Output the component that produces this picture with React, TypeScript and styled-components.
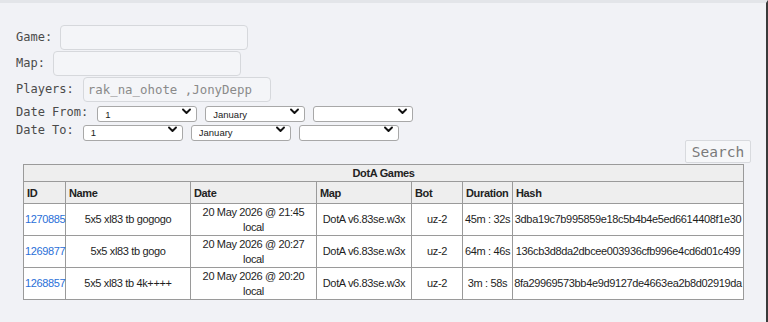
import React from "react";
import styled, { createGlobalStyle } from "styled-components";

const Global = createGlobalStyle`
  html, body { margin: 0; padding: 0; background: #f1f2f6; }
  * { box-sizing: border-box; }
`;

const Page = styled.div`
  width: 768px;
  height: 322px;
  border-top: 3px solid #e3e5e9;
  border-right: 2px solid #3a3a3a;
  padding-top: 21px;
  background: #f1f2f6;
`;

const Form = styled.form`
  display: flex;
  flex-direction: column;
  padding-left: 16px;
`;

const FieldRow = styled.div<{ $h: number; $gap: number }>`
  display: flex;
  align-items: center;
  height: ${(p) => p.$h}px;
  gap: ${(p) => p.$gap}px;
`;

const Label = styled.label`
  font-family: "DejaVu Sans Mono", monospace;
  font-size: 12px;
  color: #4a4a4a;
  white-space: pre;
`;

const TextInput = styled.input`
  width: 188px;
  height: 25px;
  border: 1px solid #d6d8dc;
  border-radius: 4px;
  background: #f4f5f8;
  padding: 0 4px;
  font-family: "DejaVu Sans Mono", monospace;
  font-size: 12.4px;
  color: #8a8a8a;
  outline: none;
`;

const SelectWrap = styled.div`
  position: relative;
  width: 100px;
  height: 16px;
`;

const NativeSelect = styled.select`
  appearance: none;
  -webkit-appearance: none;
  width: 100%;
  height: 100%;
  border: 1px solid #a8a8a8;
  border-radius: 3px;
  background: #fff;
  padding: 0 0 0 7px;
  font-family: "Liberation Sans", Arial, sans-serif;
  font-size: 9.5px;
  color: #222;
  outline: none;
`;

const Chevron = styled.svg`
  position: absolute;
  right: 6px;
  top: 4px;
  width: 9px;
  height: 7px;
  pointer-events: none;
`;

const Select = ({ value, options }: { value: string; options: string[] }) => (
  <SelectWrap>
    <NativeSelect defaultValue={value}>
      {options.map((o) => (
        <option key={o} value={o}>
          {o}
        </option>
      ))}
    </NativeSelect>
    <Chevron viewBox="0 0 9 7">
      <path d="M1 1.5 L4.5 5 L8 1.5" fill="none" stroke="#111" strokeWidth="1.9" strokeLinecap="round" strokeLinejoin="round" />
    </Chevron>
  </SelectWrap>
);

const SearchRow = styled.div`
  display: flex;
  justify-content: flex-end;
  padding-right: 15px;
  margin-top: 1px;
`;

const SearchButton = styled.button`
  width: 66px;
  height: 23px;
  border: 1px solid #d8dade;
  border-radius: 2px;
  background: #f6f7f9;
  font-family: "DejaVu Sans Mono", monospace;
  font-size: 14.5px;
  color: #7a7a7a;
  padding: 0;
`;

const Table = styled.table`
  width: 720px;
  margin: 1px 0 0 23px;
  border-collapse: collapse;
  table-layout: fixed;
  font-family: "Liberation Sans", Arial, sans-serif;
  font-size: 11px;
  letter-spacing: -0.35px;
  color: #1e1e1e;
  border: 1px solid #8e8e8e;
`;

const TitleCell = styled.th`
  background: #eeeeee;
  border: 1px solid #9a9a9a;
  text-align: center;
  font-weight: bold;
  line-height: 14px;
  padding: 1px 3px 1px;
  color: #222;
`;

const HeadCell = styled.th`
  background: #eeeeee;
  border: 1px solid #9a9a9a;
  text-align: left;
  font-weight: bold;
  line-height: 14px;
  padding: 4px 3px 3px;
  color: #222;
  white-space: nowrap;
`;

const Cell = styled.td`
  background: #ffffff;
  border: 1px solid #9a9a9a;
  text-align: center;
  line-height: 14.5px;
  padding: 1px 1px;
  white-space: nowrap;
`;

const WrapCell = styled(Cell)`
  white-space: normal;
  padding: 1px 6px;
`;

const IdLink = styled.a`
  color: #2a6fd8;
  text-decoration: none;
`;

const games = [
  { id: "1270885", name: "5x5 xl83 tb gogogo", date: "20 May 2026 @ 21:45 local", map: "DotA v6.83se.w3x", bot: "uz-2", dur: "45m : 32s", hash: "3dba19c7b995859e18c5b4b4e5ed6614408f1e30" },
  { id: "1269877", name: "5x5 xl83 tb gogo", date: "20 May 2026 @ 20:27 local", map: "DotA v6.83se.w3x", bot: "uz-2", dur: "64m : 46s", hash: "136cb3d8da2dbcee003936cfb996e4cd6d01c499" },
  { id: "1268857", name: "5x5 xl83 tb 4k++++", date: "20 May 2026 @ 20:20 local", map: "DotA v6.83se.w3x", bot: "uz-2", dur: "3m : 58s", hash: "8fa29969573bb4e9d9127de4663ea2b8d02919da" },
];

const colWidths = [42, 125, 126, 95, 51, 50, 231];
const months = ["January", "February", "March", "April", "May", "June", "July", "August", "September", "October", "November", "December"];
const days = Array.from({ length: 31 }, (_, i) => String(i + 1));

export default function App() {
  return (
    <>
      <Global />
      <Page>
        <Form onSubmit={(e) => e.preventDefault()}>
          <FieldRow $h={26} $gap={8}>
            <Label>Game:</Label>
            <TextInput type="text" />
          </FieldRow>
          <FieldRow $h={26} $gap={8}>
            <Label>Map:</Label>
            <TextInput type="text" />
          </FieldRow>
          <FieldRow $h={26} $gap={9}>
            <Label>Players:</Label>
            <TextInput type="text" defaultValue="rak_na_ohote ,JonyDepp" />
          </FieldRow>
          <FieldRow $h={19} $gap={9}>
            <Label>Date From:</Label>
            <FieldRow $h={16} $gap={8}>
              <Select value="1" options={days} />
              <Select value="January" options={months} />
              <Select value="" options={[""]} />
            </FieldRow>
          </FieldRow>
          <FieldRow $h={18} $gap={9}>
            <Label>Date To:</Label>
            <FieldRow $h={16} $gap={8}>
              <Select value="1" options={days} />
              <Select value="January" options={months} />
              <Select value="" options={[""]} />
            </FieldRow>
          </FieldRow>
        </Form>
        <SearchRow>
          <SearchButton type="button">Search</SearchButton>
        </SearchRow>
        <Table>
          <colgroup>
            {colWidths.map((w, i) => (
              <col key={i} style={{ width: w }} />
            ))}
          </colgroup>
          <thead>
            <tr>
              <TitleCell colSpan={7}>DotA Games</TitleCell>
            </tr>
            <tr>
              <HeadCell>ID</HeadCell>
              <HeadCell>Name</HeadCell>
              <HeadCell>Date</HeadCell>
              <HeadCell>Map</HeadCell>
              <HeadCell>Bot</HeadCell>
              <HeadCell>Duration</HeadCell>
              <HeadCell>Hash</HeadCell>
            </tr>
          </thead>
          <tbody>
            {games.map((g) => (
              <tr key={g.id}>
                <Cell>
                  <IdLink href="#">{g.id}</IdLink>
                </Cell>
                <Cell>{g.name}</Cell>
                <WrapCell>{g.date}</WrapCell>
                <Cell>{g.map}</Cell>
                <Cell>{g.bot}</Cell>
                <Cell>{g.dur}</Cell>
                <Cell>{g.hash}</Cell>
              </tr>
            ))}
          </tbody>
        </Table>
      </Page>
    </>
  );
}
